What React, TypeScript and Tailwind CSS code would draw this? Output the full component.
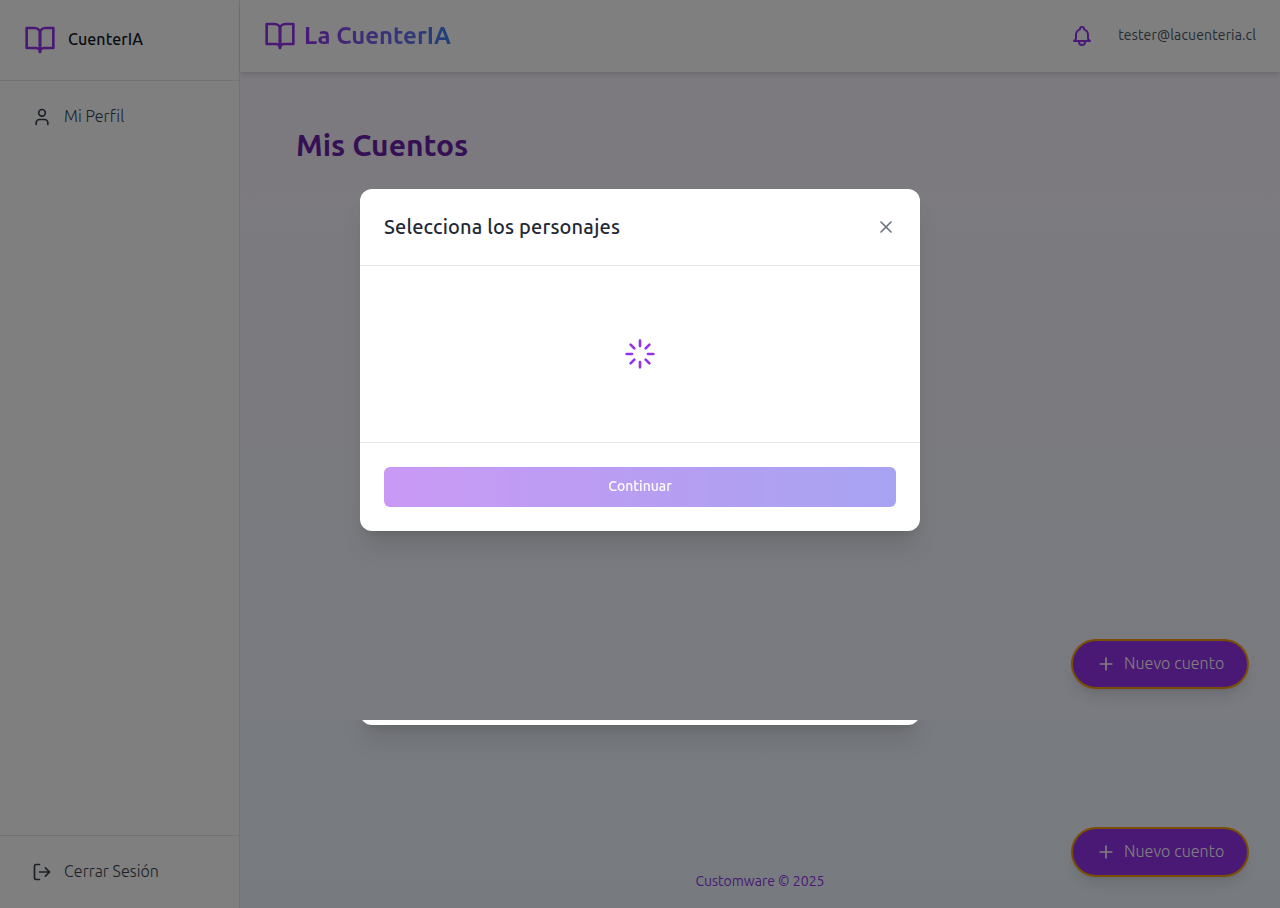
import type { ReactNode } from "react";

function Icon({ className, children }: { className: string; children: ReactNode }) {
  return (
    <svg
      viewBox="0 0 24 24"
      fill="none"
      stroke="currentColor"
      strokeWidth={2}
      strokeLinecap="round"
      strokeLinejoin="round"
      className={`shrink-0 ${className}`}
      aria-hidden="true"
    >
      {children}
    </svg>
  );
}

function BookIcon() {
  return (
    <Icon className="size-8 text-[#9333ea]">
      <path d="M2 3h6a4 4 0 0 1 4 4v14a3 3 0 0 0-3-3H2z" />
      <path d="M22 3h-6a4 4 0 0 0-4 4v14a3 3 0 0 1 3-3h7z" />
    </Icon>
  );
}

function Sidebar() {
  return (
    <aside className="flex w-60 shrink-0 flex-col border-r border-[#e5e7eb] bg-white">
      <div className="flex h-[81px] items-center gap-3 border-b border-[#e5e7eb] px-6">
        <BookIcon />
        <span className="pb-0.5 text-base font-medium tracking-[0.1px] text-[#111827]">CuenterIA</span>
      </div>
      <nav className="flex-1 px-4 pt-4">
        <a className="flex h-10 items-center gap-3 px-4 text-[#374151]">
          <Icon className="size-5">
            <path d="M19 21v-2a4 4 0 0 0-4-4H9a4 4 0 0 0-4 4v2" />
            <circle cx="12" cy="7" r="4" />
          </Icon>
          <span className="pb-0.5 text-base font-light tracking-[0.1px]">Mi Perfil</span>
        </a>
      </nav>
      <div className="h-[73px] border-t border-[#e5e7eb] p-4">
        <button className="flex h-10 w-full items-center gap-3 px-4 text-[#374151]">
          <Icon className="size-5">
            <path d="M9 21H5a2 2 0 0 1-2-2V5a2 2 0 0 1 2-2h4" />
            <path d="m16 17 5-5-5-5" />
            <path d="M21 12H9" />
          </Icon>
          <span className="pb-0.5 text-base font-light tracking-[0.08px]">Cerrar Sesión</span>
        </button>
      </div>
    </aside>
  );
}

function Header() {
  return (
    <header className="relative flex h-[72px] shrink-0 items-center justify-between bg-white px-6 shadow-md">
      <div className="flex items-center gap-2">
        <BookIcon />
        <span className="bg-linear-to-r from-[#9333ea] to-[#3b82f6] bg-clip-text text-2xl font-bold text-transparent">
          La CuenterIA
        </span>
      </div>
      <div className="flex items-center gap-6">
        <Icon className="size-6 text-[#9333ea]">
          <path d="M15 17h5l-1.405-1.405A2.032 2.032 0 0118 14.158V11a6.002 6.002 0 00-4-5.659V5a2 2 0 10-4 0v.341C7.67 6.165 6 8.388 6 11v3.159c0 .538-.214 1.055-.595 1.436L4 17h5m6 0v1a3 3 0 11-6 0v-1m6 0H9" />
        </Icon>
        <span className="pb-0.5 text-sm tracking-[0.14px] text-[#4b5563]">tester@lacuenteria.cl</span>
      </div>
    </header>
  );
}

function NewStoryButton() {
  return (
    <button className="flex h-[50px] w-[178px] items-center gap-2 rounded-full border-2 border-[#f59e0b] bg-[#9333ea] pl-[23px] text-white shadow-lg">
      <Icon className="size-5">
        <path d="M5 12h14" />
        <path d="M12 5v14" />
      </Icon>
      <span className="pb-0.5 text-base font-light tracking-[0.08px] whitespace-nowrap">Nuevo cuento</span>
    </button>
  );
}

function CharacterModal() {
  return (
    <div className="w-[560px] rounded-xl bg-white shadow-xl">
      <div className="flex h-[77px] items-center justify-between border-b border-[#e5e7eb] px-6">
        <h2 className="text-xl font-medium tracking-[0.16px] text-[#1f2937]">Selecciona los personajes</h2>
        <Icon className="size-5 text-[#6b7280]">
          <path d="M18 6 6 18" />
          <path d="m6 6 12 12" />
        </Icon>
      </div>
      <div className="flex h-44 items-center justify-center">
        <Icon className="size-8 text-[#9333ea]">
          <path d="M12 2v4M12 18v4M4.93 4.93l2.83 2.83M16.24 16.24l2.83 2.83M2 12h4M18 12h4M4.93 19.07l2.83-2.83M16.24 7.76l2.83-2.83" />
        </Icon>
      </div>
      <div className="border-t border-[#e5e7eb] p-6">
        <button className="flex h-10 w-full items-center justify-center rounded-md bg-linear-to-r from-[#9333ea] to-[#4f46e5] pb-0.5 text-sm font-medium text-white opacity-50">
          Continuar
        </button>
      </div>
    </div>
  );
}

export default function App() {
  return (
    <div className="relative h-[908px] w-[1280px] overflow-hidden font-['Ubuntu','Noto_Sans',sans-serif]">
      <div className="flex h-full">
        <Sidebar />
        <div className="flex flex-1 flex-col bg-linear-to-b from-[#faf5ff] to-[#eff6ff]">
          <Header />
          <main className="flex-1 px-14 pt-[55px]">
            <h1 className="text-3xl font-bold text-[#6b21a8]">Mis Cuentos</h1>
          </main>
          <footer className="flex h-[54px] justify-center text-sm leading-[54px] font-normal text-[#9333ea]">
            <span>Customware © 2025</span>
          </footer>
        </div>
      </div>
      <div className="absolute top-[639px] right-[31px] flex flex-col gap-[138px]">
        <NewStoryButton />
        <NewStoryButton />
      </div>
      <div className="absolute inset-0 bg-black/50" />
      <div className="absolute inset-x-0 top-0 flex h-[720px] items-center justify-center overflow-hidden">
        <CharacterModal />
      </div>
      <div className="absolute inset-x-0 top-[720px] flex h-[100px] items-start justify-center overflow-hidden">
        <div className="-mt-[37px] h-[42px] w-[560px] shrink-0 rounded-xl bg-white shadow-xl" />
      </div>
    </div>
  );
}
